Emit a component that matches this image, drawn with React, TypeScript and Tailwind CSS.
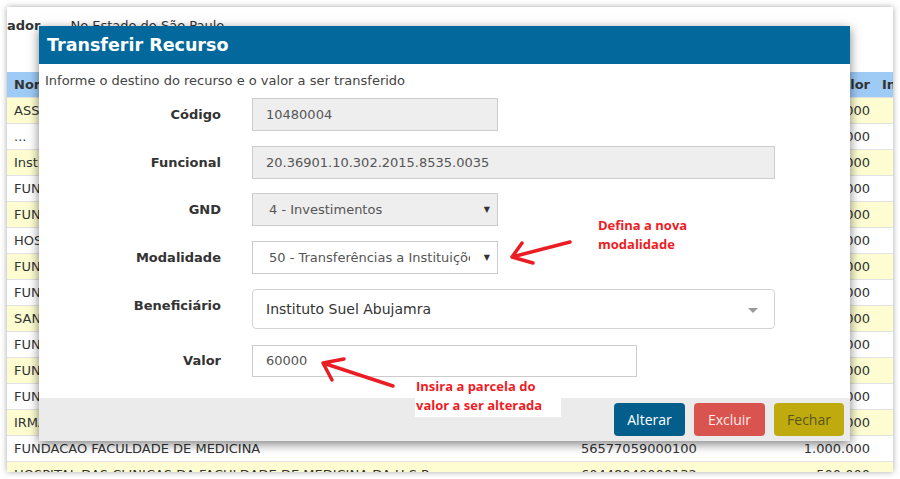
import React from "react";

const rows = [
  { name: "ASSOCIACAO BENEFICENTE", cnpj: "", valor: "100.000" },
  { name: "...", cnpj: "", valor: "200.000" },
  { name: "Instituto Suel Abujamra", cnpj: "", valor: "60.000" },
  { name: "FUNDACAO PIO XII", cnpj: "", valor: "300.000" },
  { name: "FUNDACAO ZERBINI", cnpj: "", valor: "500.000" },
  { name: "HOSPITAL SAO PAULO", cnpj: "", valor: "400.000" },
  { name: "FUNDACAO FACULDADE", cnpj: "", valor: "250.000" },
  { name: "FUNDACAO ABC", cnpj: "", valor: "150.000" },
  { name: "SANTA CASA", cnpj: "", valor: "350.000" },
  { name: "FUNDACAO DOUTOR", cnpj: "", valor: "120.000" },
  { name: "FUNDACAO ONCOCENTRO", cnpj: "", valor: "200.000" },
  { name: "FUNDACAO ANTONIO PRUDENTE", cnpj: "", valor: "100.000" },
  { name: "IRMANDADE DA SANTA CASA", cnpj: "", valor: "800.000" },
  { name: "FUNDACAO FACULDADE DE MEDICINA", cnpj: "56577059000100", valor: "1.000.000" },
  { name: "HOSPITAL DAS CLINICAS DA FACULDADE DE MEDICINA DA U.S.P.", cnpj: "60448040000132", valor: "500.000" },
];

const font = "font-['DejaVu_Sans',Verdana,sans-serif]";

const Label = ({ children, className = "" }: { children: React.ReactNode; className?: string }) => (
  <div className={`w-[182px] shrink-0 text-right text-[13px] font-bold text-[#333] ${className}`}>{children}</div>
);

const Caret = () => <span className="absolute right-[7px] top-1/2 -translate-y-1/2 text-[8px] text-[#333]">▼</span>;

export default function App() {
  return (
    <div className={`relative w-[900px] h-[479px] overflow-hidden bg-white ${font}`}>
      {/* page behind the modal */}
      <div className="mx-[7px] mt-[7px] h-[465px] bg-white shadow-[0_0_6px_rgba(0,0,0,0.35)] overflow-hidden">
        <div className="h-[65px] flex items-start pt-[9px] text-[13px] text-[#333]">
          <span className="font-bold">ador</span>
          <span className="ml-[30px]">No Estado do São Paulo</span>
        </div>
        <div className="grid grid-cols-[567px_200px_96px_23px] h-[25px] items-center bg-[#9ecbf6] text-[13px] font-bold text-[#333]">
          <div className="pl-[7px]">Nome</div>
          <div className="pl-[7px]">CNPJ</div>
          <div className="text-right">Valor</div>
          <div className="pl-[12px] whitespace-nowrap overflow-hidden">Ind</div>
        </div>
        {rows.map((r, i) => (
          <div
            key={i}
            className={`grid grid-cols-[567px_200px_96px_23px] h-[26px] items-center border-t border-[#e2e2e2] text-[13px] text-[#333] ${
              i % 2 === 0 ? "bg-[#fdfdd1]" : "bg-white"
            }`}
          >
            <div className="pl-[7px] whitespace-nowrap overflow-hidden">{r.name}</div>
            <div className="pl-[7px]">{r.cnpj}</div>
            <div className="text-right">{r.valor}</div>
            <div />
          </div>
        ))}
      </div>

      {/* modal */}
      <div className="absolute left-[39px] top-[26px] w-[811px] h-[415px] bg-white flex flex-col shadow-[0_3px_10px_rgba(0,0,0,0.5)]">
        <div className="h-[38px] shrink-0 bg-[#03699c] flex items-center pl-[8px] text-[17.5px] font-bold text-white">
          Transferir Recurso
        </div>
        <div className="flex-1 flex flex-col">
          <div className="pl-[6px] pt-[7px] h-[34px] text-[13px] text-[#444]">Informe o destino do recurso e o valor a ser transferido</div>
          <div className="flex items-center gap-[31px] h-[33px]">
            <Label>Código</Label>
            <div className="w-[246px] h-full bg-[#eee] border border-[#ccc] flex items-center pl-[13px] text-[13px] text-[#555]">10480004</div>
          </div>
          <div className="flex items-center gap-[31px] h-[33px] mt-[15px]">
            <Label>Funcional</Label>
            <div className="w-[523px] h-full bg-[#eee] border border-[#ccc] flex items-center pl-[13px] text-[13px] text-[#555]">20.36901.10.302.2015.8535.0035</div>
          </div>
          <div className="flex items-center gap-[31px] h-[33px] mt-[14px]">
            <Label>GND</Label>
            <div className="relative w-[246px] h-full bg-[#eee] border border-[#ccc] flex items-center pl-[16px] text-[13px] text-[#555]">
              4 - Investimentos
              <Caret />
            </div>
          </div>
          <div className="flex items-center gap-[31px] h-[33px] mt-[15px]">
            <Label>Modalidade</Label>
            <div className="relative w-[246px] h-full bg-white border border-[#ccc] flex items-center pl-[16px] text-[13px] text-[#555] overflow-hidden">
              <div className="w-[201px] shrink-0 overflow-hidden whitespace-nowrap">50 - Transferências a Instituições Privadas</div>
              <Caret />
            </div>
          </div>
          <div className="flex items-center gap-[31px] h-[40px] mt-[15px]">
            <Label className="-mt-[7px]">Beneficiário</Label>
            <div className="relative w-[523px] h-full bg-white border border-[#d3d3d3] rounded-[4px] flex items-center pl-[13px] text-[14px] text-[#333]">
              Instituto Suel Abujamra
              <span className="absolute right-[16px] top-[18px] border-t-[5px] border-x-[5px] border-t-[#999] border-x-transparent" />
            </div>
          </div>
          <div className="flex items-center gap-[31px] h-[32px] mt-[16px]">
            <Label>Valor</Label>
            <div className="w-[385px] h-full bg-white border border-[#ccc] flex items-center pl-[13px] text-[13px] text-[#555]">60000</div>
          </div>
        </div>
        <div className="h-[43px] shrink-0 bg-[#ebebeb] flex items-start justify-end gap-[9px] pt-[5px] pr-[6px] font-['Open_Sans',sans-serif] text-[14px]">
          <button className="w-[71px] h-[33px] rounded-[4px] bg-[#035e8b] text-white">Alterar</button>
          <button className="w-[71px] h-[33px] rounded-[4px] bg-[#d9534f] text-[#fde8e8]">Excluir</button>
          <button className="w-[70px] h-[33px] rounded-[4px] bg-[#bfab0d] text-[#5a5420]">Fechar</button>
        </div>
      </div>

      {/* annotations */}
      <div className="absolute left-[598px] top-[216px] text-[13px] leading-[19px] font-bold text-[#ee1c25] font-['Open_Sans',sans-serif]">
        Defina a nova
        <br />
        modalidade
      </div>
      <div className="absolute left-[415px] top-[377px] w-[146px] h-[40px] bg-white text-[13px] leading-[19px] font-bold text-[#ee1c25] font-['Open_Sans',sans-serif] pl-[1px]">
        Insira a parcela do
        <br />
        valor a ser alterada
      </div>
      <svg className="absolute left-0 top-0 pointer-events-none" width="900" height="479">
        <g fill="none" stroke="#ea1d25" strokeWidth="3.5" strokeLinecap="round" strokeLinejoin="round">
          <path d="M570 242 L512 257 M522 243 L512 257 L533 263" />
          <path d="M393 386 L323 363 M344 359 L323 363 L332 380" />
        </g>
      </svg>
    </div>
  );
}
